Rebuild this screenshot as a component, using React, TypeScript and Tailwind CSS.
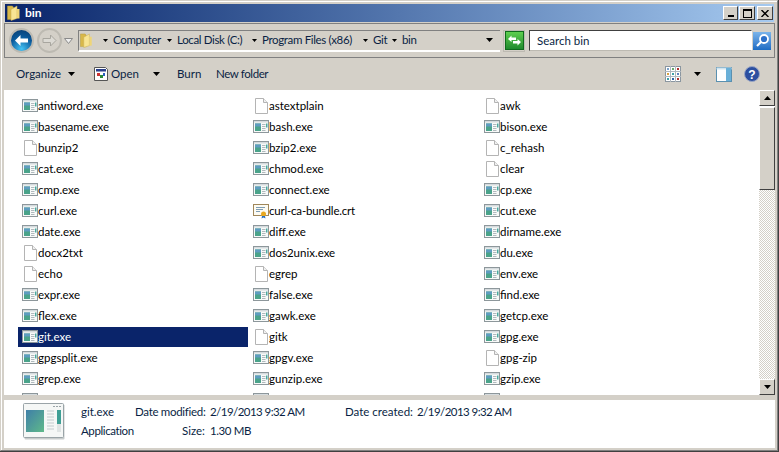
import React from "react";

const rows: string[][] = [
  ["antiword.exe", "astextplain", "awk"],
  ["basename.exe", "bash.exe", "bison.exe"],
  ["bunzip2", "bzip2.exe", "c_rehash"],
  ["cat.exe", "chmod.exe", "clear"],
  ["cmp.exe", "connect.exe", "cp.exe"],
  ["curl.exe", "curl-ca-bundle.crt", "cut.exe"],
  ["date.exe", "diff.exe", "dirname.exe"],
  ["docx2txt", "dos2unix.exe", "du.exe"],
  ["echo", "egrep", "env.exe"],
  ["expr.exe", "false.exe", "find.exe"],
  ["flex.exe", "gawk.exe", "getcp.exe"],
  ["git.exe", "gitk", "gpg.exe"],
  ["gpgsplit.exe", "gpgv.exe", "gpg-zip"],
  ["grep.exe", "gunzip.exe", "gzip.exe"],
];

function ExeIcon() {
  return (
    <svg width="16" height="16" viewBox="0 0 16 16" className="shrink-0">
      <rect x="0.5" y="1.5" width="15" height="12" fill="#f8faf9" stroke="#8d979b" />
      <rect x="1" y="2" width="14" height="1.5" fill="#d5dbde" />
      <rect x="2" y="4.5" width="6" height="7.5" fill="#4aa38a" />
      <rect x="2" y="4.5" width="6" height="3" fill="#5f9cc0" />
      <path d="M9 5.5h3.5M9 7.5h3.5M9 9.5h3.5M9 11.5h3.5" stroke="#b0b9bd" />
      <rect x="13" y="4.5" width="1.5" height="4" fill="#4aaaa0" />
    </svg>
  );
}

function DocIcon() {
  return (
    <svg width="16" height="16" viewBox="0 0 16 16" className="shrink-0">
      <path d="M2.5 0.5H10.5L14.5 4.5V15.5H2.5Z" fill="#fff" stroke="#b4b4b4" />
      <path d="M10.5 0.5V4.5H14.5" fill="#f0f0f0" stroke="#b4b4b4" />
    </svg>
  );
}

function CertIcon() {
  return (
    <svg width="16" height="16" viewBox="0 0 16 16" className="shrink-0">
      <rect x="0.5" y="1.5" width="15" height="11" fill="#fdfbf2" stroke="#a0875a" />
      <path d="M3 4.5h9M3 6.5h7M3 8.5h4" stroke="#7f9db5" />
      <circle cx="10.5" cy="11" r="2.5" fill="#e8a820" />
      <path d="M9 13l-.5 2.5 2-1 2 1L12 13" fill="#2a6fc0" />
    </svg>
  );
}

function FolderIcon({ size = 16 }: { size?: number }) {
  return (
    <svg width={size} height={size} viewBox="0 0 16 16" className="shrink-0">
      <path d="M0.5 1h5l1 1.5V14.5H0.5Z" fill="#d8b84a" stroke="#b59a3c" strokeWidth="0.5" />
      <path d="M4 4.5L10 1v12.5L4 15.5Z" fill="#f8e594" stroke="#c9ad50" strokeWidth="0.5" />
      <path d="M10 4h2.5v9.5H10Z" fill="#efd577" />
    </svg>
  );
}

function Caret({ className = "" }: { className?: string }) {
  return (
    <svg width="7" height="4" viewBox="0 0 7 4" className={"shrink-0 " + className}>
      <path d="M0 0H7L3.5 4Z" fill="#000" />
    </svg>
  );
}

function Crumb({ label, w }: { label: string; w: string }) {
  return (
    <div className="flex items-center gap-[5px]">
      <svg width="5" height="3" viewBox="0 0 5 3" className="shrink-0">
        <path d="M0 0H5L2.5 3Z" fill="#000" />
      </svg>
      <span className={w + " whitespace-nowrap tracking-[-0.35px]"}>{label}</span>
    </div>
  );
}

function CaptionButton({ children, w }: { children: React.ReactNode; w: string }) {
  return (
    <div className={w + " h-[14px] bg-[#d4d0c8] border border-t-white border-l-white border-r-[#404040] border-b-[#404040] flex items-center justify-center"}>
      {children}
    </div>
  );
}

function ScrollButton({ down }: { down?: boolean }) {
  return (
    <div className="h-[16px] w-[16px] bg-[#d4d0c8] border border-t-white border-l-white border-r-[#404040] border-b-[#404040] flex items-center justify-center shrink-0">
      <svg width="7" height="4" viewBox="0 0 7 4">
        <path d={down ? "M0 0H7L3.5 4Z" : "M0 4H7L3.5 0Z"} fill="#000" />
      </svg>
    </div>
  );
}

function Item({ name, selected }: { name: string; selected: boolean }) {
  const isExe = name.endsWith(".exe");
  const isCrt = name.endsWith(".crt");
  return (
    <div className={"h-[20px] w-[230px] mr-px mb-px flex items-center pl-[4px] " + (selected ? "bg-[#0a246a] text-white" : "text-black")}>
      {isCrt ? <CertIcon /> : isExe ? <ExeIcon /> : <DocIcon />}
      <span className={isCrt ? "tracking-[-0.2px]" : ""}>{name}</span>
    </div>
  );
}

export default function App() {
  return (
    <div
      className="w-[779px] h-[452px] overflow-hidden bg-[#d4d0c8] flex flex-col border-r border-b border-r-[#404040] border-b-[#404040] text-[11.5px] leading-[16px] text-[#0a1f44]"
      style={{ fontFamily: 'Lato, "Open Sans", sans-serif' }}
    >
      <div className="border-t border-l border-t-[#d4d0c8] border-l-[#d4d0c8] flex flex-col flex-1 min-h-0 border-r border-b border-r-[#808080] border-b-[#808080]">
        <div className="border-t border-l border-t-white border-l-white flex flex-col flex-1 min-h-0 pt-[2px] pl-[2px] pr-[2px] pb-[2px]">
          {/* Title bar */}
          <div className="h-[18px] mx-[1px] bg-gradient-to-r from-[#0a246a] to-[#a6caf0] flex items-center justify-between pl-[2px] pr-[1px] shrink-0">
            <div className="flex items-center gap-[2px] text-white font-bold text-[12px]">
              <FolderIcon />
              <span>bin</span>
            </div>
            <div className="flex items-center">
              <CaptionButton w="w-[15px]">
                <div className="w-[6px] h-[2px] bg-black mt-[6px]" />
              </CaptionButton>
              <div className="w-[1px]" />
              <CaptionButton w="w-[16px]">
                <div className="w-[9px] h-[9px] border border-black border-t-2" />
              </CaptionButton>
              <div className="w-[2px]" />
              <CaptionButton w="w-[16px]">
                <svg width="8" height="7" viewBox="0 0 8 7">
                  <path d="M0.5 0L7.5 7M7.5 0L0.5 7" stroke="#000" strokeWidth="1.4" />
                </svg>
              </CaptionButton>
            </div>
          </div>

          {/* Address bar */}
          <div className="h-[35px] shrink-0 mt-px border border-[#808080] flex items-center pl-[4px] pr-[2px]">
            <div className="w-[25px] h-[25px] rounded-full bg-[radial-gradient(circle_at_50%_90%,#45c4f5,#0a5a9c_55%,#0a3a6c)] border-[2px] border-[#bdbab2] flex items-center justify-center shrink-0">
              <svg width="15" height="13" viewBox="0 0 15 13">
                <path d="M1 6.5L6.5 1V4.5H14V8.5H6.5V12Z" fill="#fff" />
              </svg>
            </div>
            <div className="w-[25px] h-[25px] ml-[3px] rounded-full bg-[#d4d0c8] border-[2px] border-[#bdbab2] flex items-center justify-center shrink-0">
              <svg width="15" height="13" viewBox="0 0 15 13">
                <path d="M14 6.5L8.5 1V4.5H1V8.5H8.5V12Z" fill="#dcdad4" stroke="#a8a69f" />
              </svg>
            </div>
            <svg width="9" height="6" viewBox="0 0 9 6" className="ml-[2px] shrink-0">
              <path d="M0.5 0.5H8.5L4.5 5.5Z" fill="#eeeeee" stroke="#8a8a8a" />
            </svg>
            <div className="ml-[5px] w-[422px] h-[22px] border-t border-l border-t-[#808080] border-l-[#808080] border-b-2 border-b-white flex items-center pl-[1px] shrink-0">
              <FolderIcon size={15} />
              <div className="flex items-center gap-[7px] ml-[8px]">
                <Crumb label="Computer" w="w-[47px]" />
                <Crumb label="Local Disk (C:)" w="w-[68px]" />
                <Crumb label="Program Files (x86)" w="w-[94px]" />
                <Crumb label="Git" w="w-[12px]" />
                <Crumb label="bin" w="w-[14px]" />
              </div>
              <div className="flex-1" />
              <Caret className="mr-[7px]" />
            </div>
            <div className="w-[22px] h-[22px] ml-[3px] bg-[#d4d0c8] border border-[#bdbab2] flex items-center justify-center shrink-0">
              <div className="w-[19px] h-[19px] bg-gradient-to-b from-[#5ecf4f] to-[#1d8a2d] border border-[#0f6a1c] flex items-center justify-center">
                <svg width="15" height="13" viewBox="0 0 15 13">
                  <path d="M1 5L4.5 1.5V3.5H9V6H4.5V8ZM14 8L10.5 11.5V9.5H6V7H10.5V5Z" fill="#fff" />
                </svg>
              </div>
            </div>
            <div className="ml-[4px] flex-1 h-[21px] border-t border-l border-t-[#404040] border-l-[#404040] border-r border-b border-r-white border-b-[#bdbab2] bg-white flex items-center pl-[7px]">
              Search bin
            </div>
            <div className="w-[20px] h-[20px] bg-gradient-to-b from-[#7ab4ea] to-[#1c6cc4] border border-[#d4d0c8] flex items-center justify-center shrink-0">
              <svg width="15" height="15" viewBox="0 0 15 15">
                <circle cx="9" cy="6" r="4" fill="#2c70c8" stroke="#fff" strokeWidth="1.8" />
                <path d="M6 9L2 13" stroke="#fff" strokeWidth="2.2" />
              </svg>
            </div>
          </div>

          {/* Toolbar */}
          <div className="h-[32px] shrink-0 flex items-center pl-[12px] pr-[15px]">
            <span className="w-[44px]">Organize</span>
            <Caret className="ml-[8px]" />
            <svg width="16" height="16" viewBox="0 0 16 16" className="ml-[18px] shrink-0">
              <path d="M1.5 1.5H12.5L14.5 3.5V14.5H1.5Z" fill="#fff" stroke="#555" />
              <rect x="3" y="3" width="10" height="2.5" fill="#2a3f8a" />
              <rect x="4" y="7" width="3" height="3" fill="#c33" />
              <rect x="7" y="9" width="3" height="3" fill="#2a8a3a" />
              <rect x="10" y="7" width="2" height="3" fill="#2a5fc0" />
            </svg>
            <span className="ml-[2px] w-[28px]">Open</span>
            <Caret className="ml-[14px]" />
            <span className="ml-[17px] w-[22px]">Burn</span>
            <span className="ml-[17px] tracking-[-0.4px]">New folder</span>
            <div className="flex-1" />
            <svg width="16" height="16" viewBox="0 0 16 16" className="shrink-0">
              <rect x="0.5" y="0.5" width="15" height="15" fill="#fff" stroke="#8a96a0" />
              <path d="M5.5 0V16M10.5 0V16M0 5.5H16M0 10.5H16" stroke="#b0b8c0" />
              <rect x="2" y="2" width="2" height="2" fill="#7aa0c8" />
              <rect x="7" y="2" width="2" height="2" fill="#6aa86a" />
              <rect x="12" y="2" width="2" height="2" fill="#b03030" />
              <rect x="2" y="7" width="2" height="2" fill="#d8a040" />
              <rect x="7" y="7" width="2" height="2" fill="#40a0a8" />
              <rect x="12" y="7" width="2" height="2" fill="#6080c0" />
              <rect x="2" y="12" width="2" height="2" fill="#40a0a8" />
              <rect x="7" y="12" width="2" height="2" fill="#3060a8" />
              <rect x="12" y="12" width="2" height="2" fill="#b03030" />
            </svg>
            <Caret className="ml-[13px]" />
            <svg width="16" height="15" viewBox="0 0 16 15" className="ml-[15px] shrink-0">
              <rect x="0.5" y="0.5" width="15" height="14" fill="#fff" stroke="#5a90b0" />
              <rect x="0.5" y="0.5" width="15" height="2" fill="#cfe4f0" />
              <rect x="10" y="1" width="5" height="13" fill="#6ab0d8" />
            </svg>
            <svg width="16" height="16" viewBox="0 0 16 16" className="ml-[12px] shrink-0">
              <circle cx="8" cy="8" r="7.5" fill="#2c4fa0" stroke="#9aa6c4" />
              <text x="8" y="12.5" textAnchor="middle" fontSize="12" fontWeight="700" fill="#fff" fontFamily="Liberation Sans, sans-serif">?</text>
            </svg>
          </div>

          {/* Content */}
          <div className="h-[305px] shrink-0 bg-white flex overflow-hidden">
            <div className="flex-1 pt-[6px] pl-[14px] overflow-hidden">
              {rows.map((r) => (
                <div key={r[0]} className="flex">
                  {r.map((n) => (
                    <Item key={n} name={n} selected={n === "git.exe"} />
                  ))}
                </div>
              ))}
              <div className="flex">
                <div className="w-[231px] h-[20px] pl-[4px] flex items-center"><ExeIcon /></div>
                <div className="w-[231px] h-[20px] pl-[4px] flex items-center"><ExeIcon /></div>
                <div className="w-[231px] h-[20px] pl-[4px] flex items-center"><ExeIcon /></div>
              </div>
            </div>
            <div className="w-[16px] shrink-0 flex flex-col">
              <ScrollButton />
              <div className="h-[83px] mt-px bg-[#d4d0c8] border border-t-white border-l-white border-r-[#404040] border-b-[#404040] shrink-0" />
              <div className="flex-1 bg-[repeating-conic-gradient(#d4d0c8_0_25%,#fff_0_50%)] bg-[length:2px_2px]" />
              <ScrollButton down />
            </div>
          </div>

          {/* Details pane */}
          <div className="h-[5px] shrink-0" />
          <div className="flex-1 min-h-0 bg-white flex pl-[19px] pt-[3px]">
            <svg width="42" height="37" viewBox="0 0 42 37" className="shrink-0">
              <defs>
                <linearGradient id="thumbFill" x1="0" y1="0" x2="1" y2="1">
                  <stop offset="0" stopColor="#3f7fa8" />
                  <stop offset="1" stopColor="#5fb98a" />
                </linearGradient>
              </defs>
              <rect x="1.5" y="1.5" width="40" height="35" rx="1" fill="#c8cccc" />
              <rect x="0.5" y="0.5" width="40" height="34" rx="1" fill="#f5f7f6" stroke="#9aa4a8" />
              <path d="M30 3.5h2M33 3.5h2M36 3.5h2" stroke="#9aa4a8" />
              <rect x="3" y="7" width="18" height="22" fill="url(#thumbFill)" />
              <path d="M24 8h7M24 11h7M24 14h7M24 17h7M24 20h7M24 23h7M24 26h7" stroke="#c4cbce" />
              <rect x="34" y="7" width="4" height="14" fill="#3f9f95" />
              <rect x="34" y="21" width="4" height="8" fill="#dfe4e4" />
            </svg>
            <div className="ml-[16px] mt-[1px] grid grid-cols-[54px_70px_140px_72px_auto] grid-rows-[19px_19px] whitespace-nowrap">
              <span>git.exe</span>
              <span className="text-right tracking-[-0.3px]">Date modified:</span>
              <span className="pl-[5px] tracking-[-0.55px]">2/19/2013 9:32 AM</span>
              <span>Date created:</span>
              <span className="tracking-[-0.55px]">2/19/2013 9:32 AM</span>
              <span className="tracking-[-0.4px]">Application</span>
              <span className="text-right">Size:</span>
              <span className="pl-[5px] tracking-[-0.4px]">1.30 MB</span>
            </div>
          </div>
        </div>
      </div>
    </div>
  );
}
